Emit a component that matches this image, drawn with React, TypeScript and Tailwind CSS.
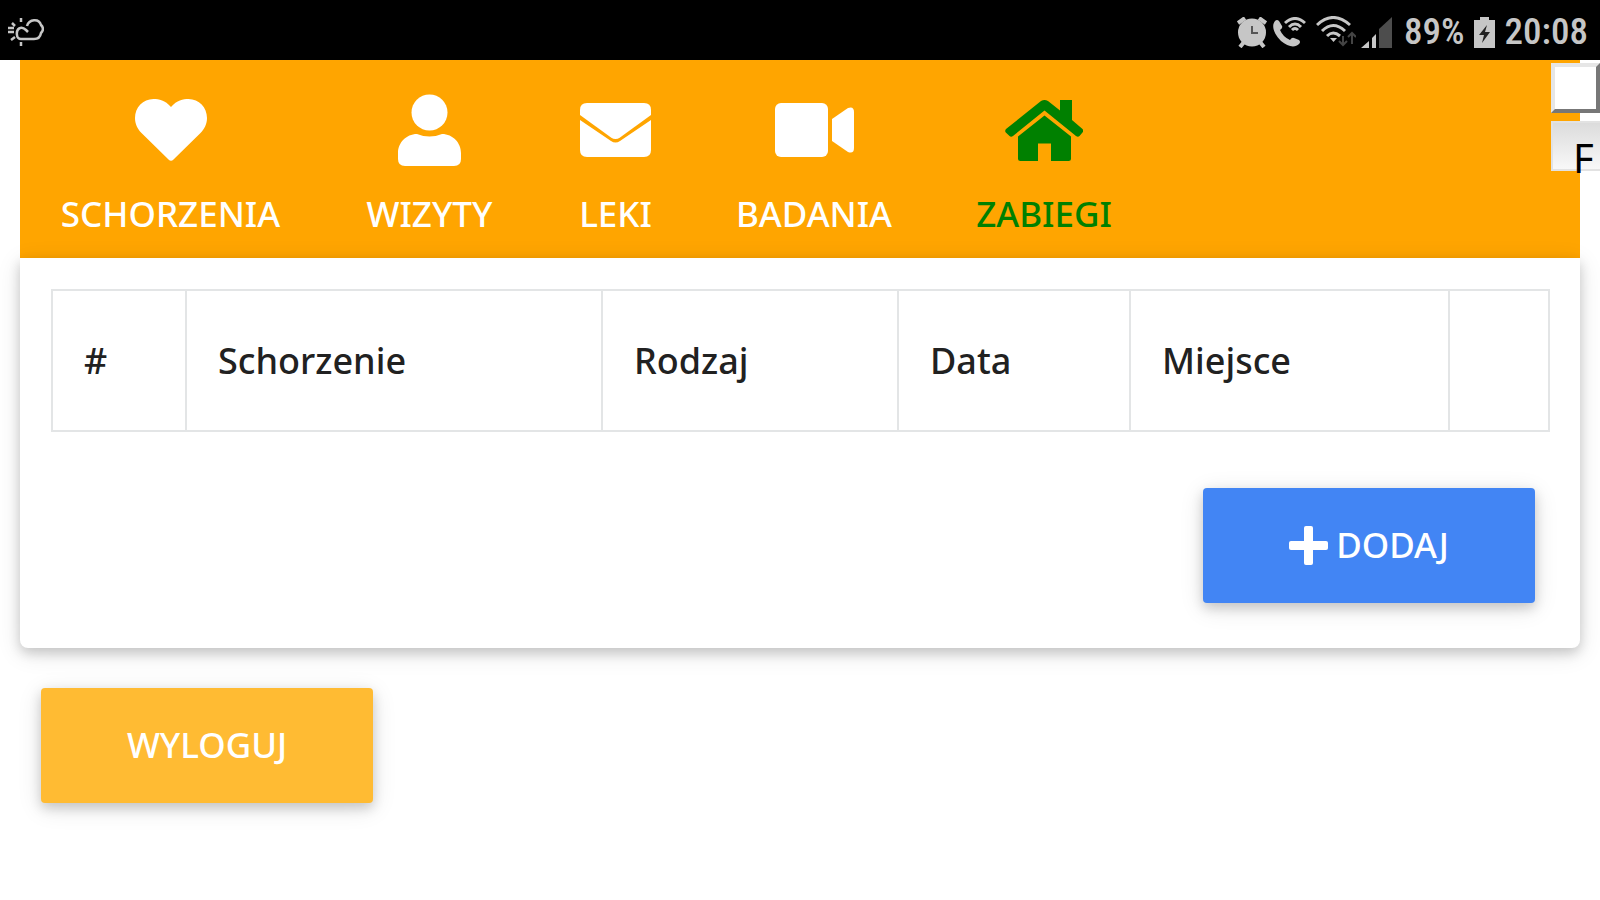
import type { ReactNode } from "react";

const iconClass = "fill-current";

const navItems: { label: string; width: string; active?: boolean; icon: ReactNode }[] = [
  {
    label: "Schorzenia",
    width: "w-[301px]",
    icon: (
      <svg className={iconClass} width="72" height="62" viewBox="0 0 72 62">
        <path d="M36 8C30 1 24 0 18.500 0C8 0 0 8.500 0 19C0 25 2.500 30 6.500 34L33.500 60.500Q36 63 38.500 60.500L65.500 34C69.500 30 72 25 72 19C72 8.500 64 0 53.500 0C48 0 42 1 36 8Z" />
      </svg>
    ),
  },
  {
    label: "Wizyty",
    width: "w-[217px]",
    icon: (
      <svg className={iconClass} width="63" height="72" viewBox="0 0 63 72">
        <circle cx="31.500" cy="18.500" r="18" />
        <path d="M19 40Q31.500 45 44 40C55 40 63 49 63 59V65Q63 72 56 72H7Q0 72 0 65V59C0 49 8 40 19 40Z" />
      </svg>
    ),
  },
  {
    label: "Leki",
    width: "w-[155px]",
    icon: (
      <svg className={iconClass} width="71" height="54" viewBox="0 0 71 54">
        <path d="M0 7Q0 0 7 0H64Q71 0 71 7V12L40 34.500Q35.500 37.500 31 34.500L0 12Z" />
        <path d="M0 17L31 38Q35.500 41 40 38L71 17V47Q71 54 64 54H7Q0 54 0 47Z" />
      </svg>
    ),
  },
  {
    label: "Badania",
    width: "w-[242px]",
    icon: (
      <svg className={iconClass} width="79" height="54" viewBox="0 0 79 54">
        <rect width="53" height="54" rx="6" />
        <path d="M57 16L73 5Q79 3 79 9V45Q79 51 73 49L57 38Z" />
      </svg>
    ),
  },
  {
    label: "Zabiegi",
    width: "w-[218px]",
    active: true,
    icon: (
      <svg className={iconClass} width="78" height="61" viewBox="0 0 78 61">
        <path d="M36 1Q39.500 -1 43 1L55 10.500V0H67V20L77.500 29Q79 31 77.500 32.500L74.500 36Q73 37.500 71 36L39.500 10.500L8 36Q6 37.500 4.500 36L.8 32.500Q-.5 31 1 29Z" />
        <path d="M39.500 15.500L66 36.500V58.500Q66 61 63.500 61H46V43.500H33V61H15.500Q13 61 13 58.500V36.500Z" />
      </svg>
    ),
  },
];

const columns = [
  { name: "#", width: "w-[134px]" },
  { name: "Schorzenie", width: "w-[416px]" },
  { name: "Rodzaj", width: "w-[296px]" },
  { name: "Data", width: "w-[232px]" },
  { name: "Miejsce", width: "w-[319px]" },
  { name: "", width: "w-[100px]" },
];

function StatusBar() {
  return (
    <header className="flex h-[60px] items-center justify-between bg-black pt-1 pr-3 pl-2 text-[#c6c6c6]">
      {/* Weather */}
      <svg width="36" height="28" viewBox="0 0 36 28" fill="none" stroke="currentColor" strokeWidth="2.5">
        <path d="M13 21A4 4 0 0 1 9 17C8 11 13 7 18 12L20 14M19 8C21 1 31 0 33 7Q37 11 33 15Q32 21 26 21H13" />
        <path d="M13 0V4M4 5L7 8M0 10H6M0 14H6M3 22L7 19M13 24V28" />
      </svg>

      <div className="flex items-center">
        {/* Alarm */}
        <svg className="mr-[6px]" width="30" height="31" viewBox="0 0 30 31">
          <g stroke="currentColor" strokeWidth="4" fill="none">
            <path d="M1 6L8 1M29 6L22 1M7 25L3 30M23 25L27 30" />
          </g>
          <circle cx="15" cy="15.500" r="14" fill="currentColor" />
          <path d="M15 9V16H21" fill="none" stroke="#555" strokeWidth="2" />
        </svg>
        {/* Wi-Fi calling */}
        <svg className="mr-[10px]" width="33" height="30" viewBox="0 0 33 30">
          <path
            fill="currentColor"
            d="M2 4Q4 2 6 4L9 9Q10 11 7 13Q10 20 17 23Q19 20 21 21L26 23Q28 25 26 27C22 31 15 30 8 24C1 17-2 9 2 4Z"
          />
          <path
            d="M12 6Q22 -3 32 6M16 10Q22 4 28 10M19 13Q22 10 25 13"
            fill="none"
            stroke="currentColor"
            strokeWidth="3"
          />
        </svg>
        {/* Wi-Fi */}
        <svg className="mr-[5px]" width="40" height="32" viewBox="0 0 40 32" fill="none">
          <path
            d="M1 9Q17 -6 34 9M6 15Q17 4 29 15M11 20Q17 14 24 20"
            stroke="currentColor"
            strokeWidth="3"
          />
          <path d="M14 22H21L17.500 26Z" fill="currentColor" />
          <path d="M27 20V29M23 25L27 29L31 25M36 28V17M32 21L36 17L40 21" stroke="#444" strokeWidth="2" />
        </svg>
        {/* Signal */}
        <svg className="mr-3" width="31" height="31" viewBox="0 0 31 31">
          <path d="M18 12L31 0V31H18Z" fill="#4d4d4d" />
          <path d="M0 31L8 24V31ZM11 21L15 17V31H11Z" fill="currentColor" />
        </svg>
        <span className="mr-[9px] font-['Roboto_Condensed',Roboto,sans-serif] text-[37px] leading-10 font-medium">
          89%
        </span>
        {/* Battery */}
        <svg className="mr-[10px]" width="21" height="31" viewBox="0 0 21 31">
          <path d="M6 0H15V3H21V31H0V3H6Z" fill="currentColor" />
          <path d="M13 8L5 18H10L8 26L16 15H11Z" fill="#222" />
        </svg>
        <span className="font-['Roboto_Condensed',Roboto,sans-serif] text-[37px] leading-10 font-medium">20:08</span>
      </div>
    </header>
  );
}

function Navigation() {
  return (
    <nav className="flex bg-[#ffa500]">
      {navItems.map((item) => (
        <a
          key={item.label}
          href="#"
          aria-current={item.active ? "page" : undefined}
          className={`${item.width} flex flex-col items-center gap-6 pt-[34px] pb-5 font-medium uppercase ${
            item.active ? "text-[#008000]" : "text-white"
          }`}
        >
          <span className="flex h-[72px] items-center">{item.icon}</span>
          <span className="text-[35px] leading-[48px]">{item.label}</span>
        </a>
      ))}
    </nav>
  );
}

export default function App() {
  return (
    <div className="relative min-h-screen overflow-hidden bg-white font-['Noto_Sans',sans-serif]">
      <StatusBar />

      <main className="px-5">
        <Navigation />

        <section className="rounded-b-lg bg-white px-[31px] pt-[31px] pb-[45px] shadow-[0_5px_12px_rgba(0,0,0,0.16),0_5px_25px_rgba(0,0,0,0.12)]">
          <table className="w-full table-fixed border-collapse border-2 border-[#dee2e6]">
            <thead>
              <tr>
                {columns.map((column) => (
                  <th
                    key={column.width}
                    scope="col"
                    className={`${column.width} h-[141px] border-2 border-[#e3e5e6] px-[31px] text-left text-[36px] leading-[48px] font-medium text-[#212121]`}
                  >
                    {column.name}
                  </th>
                ))}
              </tr>
            </thead>
          </table>

          <div className="mt-14 mr-[14px] flex justify-end">
            <button
              type="button"
              className="flex h-[115px] w-[332px] items-center justify-center gap-2 rounded bg-[#4285f4] text-[35px] font-medium text-white uppercase shadow-[0_5px_12px_rgba(0,0,0,0.16),0_5px_25px_rgba(0,0,0,0.12)]"
            >
              <svg className={iconClass} width="39" height="39" viewBox="0 0 39 39">
                <rect x="15" width="9" height="39" rx="2" />
                <rect y="15" width="39" height="9" rx="2" />
              </svg>
              Dodaj
            </button>
          </div>
        </section>

        <button
          type="button"
          className="mt-10 ml-[21px] h-[115px] w-[332px] rounded bg-[#ffbb33] text-[35px] font-medium text-white uppercase shadow-[0_5px_12px_rgba(0,0,0,0.16),0_5px_25px_rgba(0,0,0,0.12)]"
        >
          Wyloguj
        </button>
      </main>

      {/* Floating controls, partly off the right edge */}
      <div className="absolute top-[63px] -right-2 flex w-[57px] flex-col gap-2">
        <input
          type="text"
          aria-label="F"
          className="h-[50px] w-[49px] border-4 border-t-[#e6e6e6] border-r-[#777] border-b-[#777] border-l-[#e6e6e6] bg-white"
        />
        <button
          type="button"
          className="h-[50px] border-2 border-[#e2e2e2] bg-linear-to-b from-[#dcdcdc] to-[#f8f8f8] pt-6 pl-5 text-left text-[40px] leading-[22px] text-black"
        >
          F
        </button>
      </div>
    </div>
  );
}
